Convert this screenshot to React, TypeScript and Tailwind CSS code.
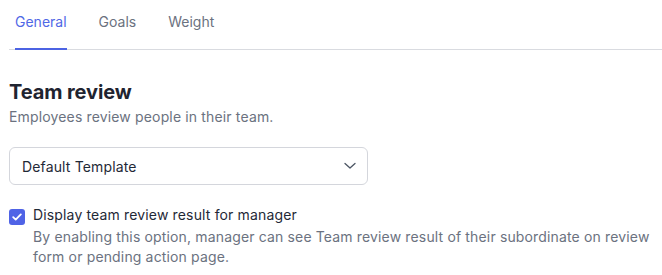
import React, { useState } from 'react';

const tabs = ['General', 'Goals', 'Weight'];

const App: React.FC = () => {
  const [activeTab, setActiveTab] = useState('General');
  const [showResult, setShowResult] = useState(true);

  return (
    <div
      className="min-h-[275px] bg-white pl-[9px] text-[14px] text-[#1f2937]"
      style={{ fontFamily: 'Inter, "Liberation Sans", sans-serif' }}
    >
      {/* 탭 */}
      <div className="flex h-[50px] gap-8 border-b border-[#d9dbe0] pl-[6px]">
        {tabs.map((tab) => (
          <button
            key={tab}
            onClick={() => setActiveTab(tab)}
            className={`-mb-px flex items-start border-b-2 pt-3 leading-5 ${
              activeTab === tab
                ? 'border-[#4c63e3] text-[#5068e6]'
                : 'border-transparent text-[#6b7280]'
            }`}
          >
            {tab}
          </button>
        ))}
      </div>

      {/* 팀 리뷰 */}
      <div className="pr-2 pt-[28px] tracking-[0.15px]">
        <h2 className="text-[20px] font-bold leading-7 tracking-[-0.1px] text-[#1f2430]">Team review</h2>
        <p className="mt-px leading-5 text-[#6b7280]">Employees review people in their team.</p>

        <button className="mt-5 flex h-[38px] w-[359px] items-center justify-between rounded-[6px] border border-[#d4d6dc] pl-[12px] pr-[10px] text-[#1f2937]">
          <span>Default Template</span>
          <svg width="12" height="8" viewBox="0 0 12 8" fill="none" className="mr-[1px]">
            <path d="M1 1.5l5 4.5 5-4.5" stroke="#4b5563" strokeWidth="1.3" strokeLinecap="round" strokeLinejoin="round" />
          </svg>
        </button>

        <div className="mt-[20px] flex gap-2">
          <button
            onClick={() => setShowResult(!showResult)}
            className={`mt-[4px] flex h-4 w-4 shrink-0 items-center justify-center rounded-[3px] ${
              showResult ? 'bg-[#4f63e6]' : 'border border-[#d1d5db] bg-white'
            }`}
          >
            {showResult && (
              <svg width="10" height="8" viewBox="0 0 10 8" fill="none">
                <path d="M1.2 4.2l2.5 2.4L8.8 1.4" stroke="white" strokeWidth="1.8" strokeLinecap="round" strokeLinejoin="round" />
              </svg>
            )}
          </button>
          <div className="leading-5">
            <div className="text-[#1f2937]">Display team review result for manager</div>
            <div className="mt-[2px] text-[#6b7280]">
              By enabling this option, manager can see Team review result of their subordinate on review form or pending action page.
            </div>
          </div>
        </div>
      </div>
    </div>
  );
};

export default App;
